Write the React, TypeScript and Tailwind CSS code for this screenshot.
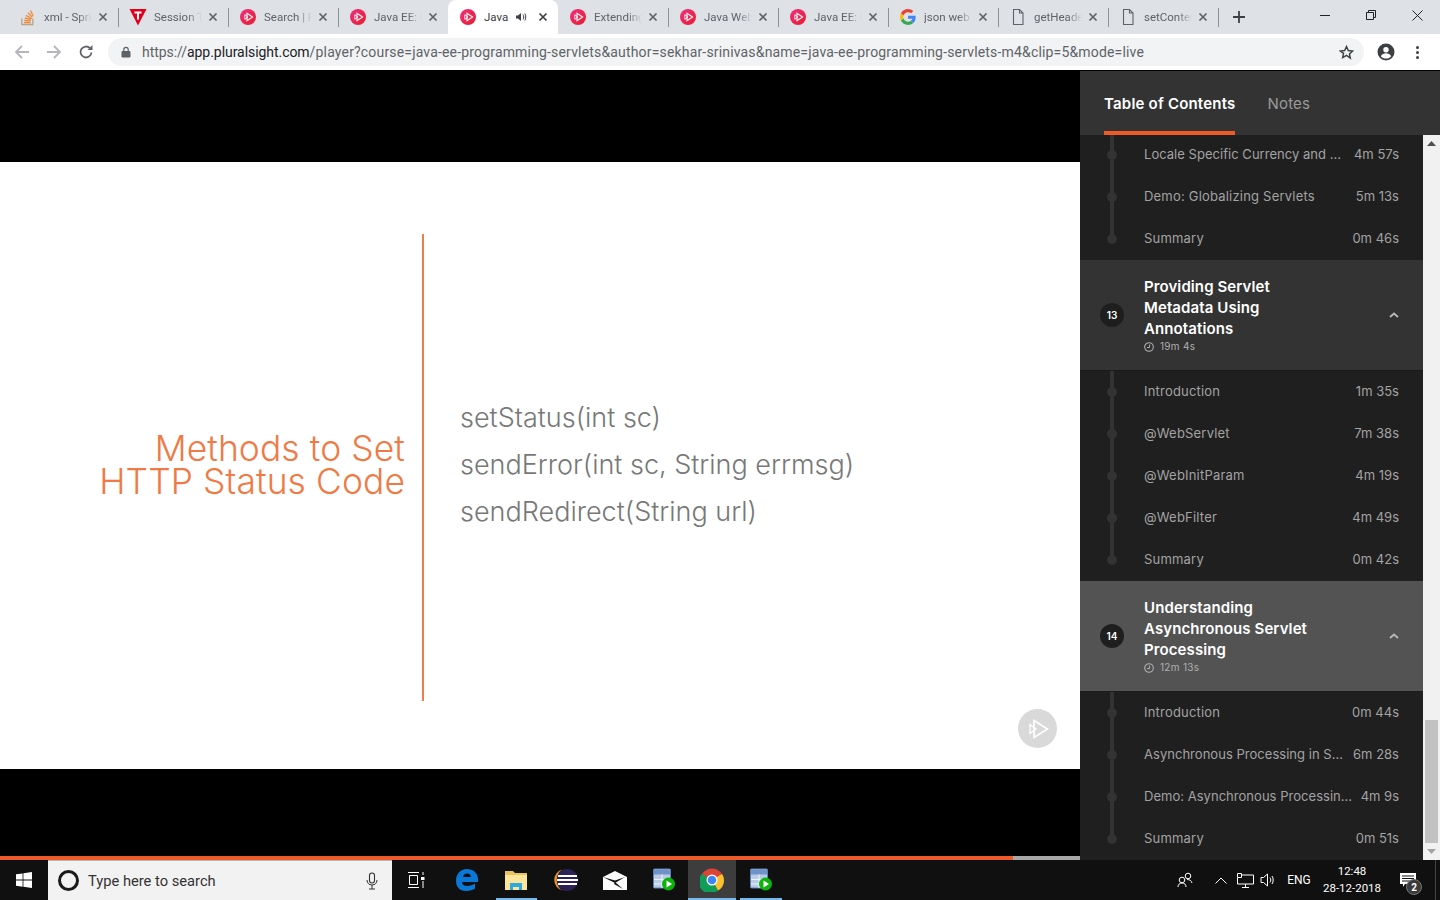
import React from "react";

const PS = () => (
  <svg width="16" height="16" viewBox="0 0 16 16" className="shrink-0">
    <defs>
      <linearGradient id="psg" x1="0" y1="0" x2="1" y2="1">
        <stop offset="0" stopColor="#f0307f" />
        <stop offset="1" stopColor="#e81c2c" />
      </linearGradient>
    </defs>
    <circle cx="8" cy="8" r="8" fill="url(#psg)" />
    <path d="M7 4.200v7.600L12.600 8z" fill="none" stroke="#fff" strokeWidth="1.100" />
    <path d="M4.800 5.700v4.600L8 8z" fill="none" stroke="#fff" strokeWidth=".9" />
  </svg>
);
const SO = () => (
  <svg width="16" height="18" viewBox="0 0 16 18" className="shrink-0">
    <path d="M1.800 10.500v6h11v-6" fill="none" stroke="#b9a38c" strokeWidth="1.300" />
    <path d="M4 14.500h6.500M4.200 12.300l6.400.6M4.800 10l6.200 1.600M6 7.400l5.600 3.200M8 4.800l4.400 4.500M10.500 2.500l2.700 5.500" fill="none" stroke="#f08a38" strokeWidth="1.300" />
  </svg>
);
const VI = () => (
  <svg width="18" height="18" viewBox="0 0 18 18" className="shrink-0">
    <path d="M.5 1h17L9 17.500z" fill="#e3001b" />
    <path d="M5.500 3.500h7v2h-2.500v6H8v-6H5.500z" fill="#fff" />
  </svg>
);
const G = () => (
  <svg width="16" height="16" viewBox="0 0 48 48" className="shrink-0">
    <path fill="#EA4335" d="M24 9.500c3.500 0 6.700 1.300 9.100 3.500l6.800-6.800C35.800 2.400 30.300 0 24 0 14.600 0 6.500 5.400 2.600 13.200l7.900 6.200C12.400 13.700 17.700 9.500 24 9.500z" />
    <path fill="#4285F4" d="M46.900 24.500c0-1.600-.1-3.100-.4-4.500H24v9h12.900c-.6 3-2.200 5.500-4.700 7.200l7.700 6c4.500-4.200 7-10.300 7-17.700z" />
    <path fill="#FBBC05" d="M10.500 28.600c-.5-1.400-.8-3-.8-4.600s.3-3.200.8-4.600l-7.900-6.200C.9 16.500 0 20.100 0 24s.9 7.500 2.600 10.800z" />
    <path fill="#34A853" d="M24 48c6.500 0 11.900-2.100 15.900-5.800l-7.700-6c-2.100 1.400-4.900 2.300-8.200 2.300-6.300 0-11.600-4.200-13.500-9.900l-7.900 6.200C6.500 42.600 14.600 48 24 48z" />
  </svg>
);
const Doc = () => (
  <svg width="16" height="18" viewBox="0 0 16 18" className="shrink-0">
    <path d="M3.500 1.500h6l3.500 3.500v11.500h-9.500zM9.500 1.500V5H13" fill="none" stroke="#5f6368" strokeWidth="1.100" />
  </svg>
);
const X = ({ c = "#5f6368" }: { c?: string }) => (
  <svg width="10" height="10" viewBox="0 0 10 10" className="shrink-0">
    <path d="M1.500 1.500l7 7M8.500 1.500l-7 7" stroke={c} strokeWidth="1.700" />
  </svg>
);
const Speaker = () => (
  <svg width="12" height="12" viewBox="0 0 12 12" className="shrink-0">
    <path d="M1 4.500h2L6 2v8L3 7.500H1z" fill="#3c4043" />
    <path d="M8 3.500c1 1.500 1 3.500 0 5M9.800 2.500c1.300 2 1.300 5 0 7" fill="none" stroke="#3c4043" strokeWidth="1" />
  </svg>
);

type Tab = { icon: React.ReactNode; title: string };
const tabs: Tab[] = [
  { icon: <SO />, title: "xml - Spring" },
  { icon: <VI />, title: "Session Tracking" },
  { icon: <PS />, title: "Search | Pluralsight" },
  { icon: <PS />, title: "Java EE: Programming" },
  { icon: <PS />, title: "Java" },
  { icon: <PS />, title: "Extending Servlets" },
  { icon: <PS />, title: "Java Web Services" },
  { icon: <PS />, title: "Java EE: Programming" },
  { icon: <G />, title: "json web token" },
  { icon: <Doc />, title: "getHeaders" },
  { icon: <Doc />, title: "setContentType" },
];

function TabStrip() {
  return (
    <div className="flex h-[34px] shrink-0 bg-[#dee1e6] pl-2">
      {tabs.map((t, i) => {
        const active = i === 4;
        return (
          <div
            key={i}
            className={
              active
                ? "relative flex h-[34px] w-[110px] shrink-0 items-center rounded-t-[8px] bg-white"
                : "relative flex h-[34px] w-[110px] shrink-0 items-center"
            }
          >
            <div className="flex w-9 shrink-0 justify-center pl-[4px]">{t.icon}</div>
            <div
              className={
                active
                  ? "w-[28px] overflow-hidden whitespace-nowrap pt-px text-[11.500px] text-[#3c4043]"
                  : "w-[48px] overflow-hidden whitespace-nowrap pt-px text-[11.500px] text-[#5f6368] [mask-image:linear-gradient(to_right,black_70%,transparent)]"
              }
            >
              {t.title}
            </div>
            {active && (
              <div className="ml-[3px] flex w-3 justify-center">
                <Speaker />
              </div>
            )}
            <div className={active ? "ml-[11px]" : "ml-[6px]"}>
              <X c={active ? "#3c4043" : "#5f6368"} />
            </div>
            {i !== 3 && i !== 4 && <div className="absolute top-[8px] -right-px h-[19px] w-px bg-[#8e9196]" />}
          </div>
        );
      })}
      <div className="ml-[9px] flex h-[34px] w-[24px] items-center justify-center">
        <svg width="14" height="14" viewBox="0 0 14 14">
          <path d="M7 1v12M1 7h12" stroke="#3c4043" strokeWidth="1.800" />
        </svg>
      </div>
      <div className="ml-auto flex h-[30px] items-center">
        <div className="flex w-[46px] justify-center">
          <svg width="10" height="10" viewBox="0 0 10 10"><path d="M0 5.500h10" stroke="#222" strokeWidth="1" /></svg>
        </div>
        <div className="flex w-[46px] justify-center">
          <svg width="10" height="10" viewBox="0 0 10 10"><path d="M.5 2.500h7v7h-7zM2.500 2.500v-2h7v7h-2" fill="none" stroke="#222" strokeWidth="1" /></svg>
        </div>
        <div className="flex w-[46px] justify-center">
          <svg width="11" height="11" viewBox="0 0 11 11"><path d="M.5.500l10 10M10.500.500l-10 10" stroke="#222" strokeWidth="1" /></svg>
        </div>
      </div>
    </div>
  );
}

function Toolbar() {
  return (
    <div className="flex h-[37px] shrink-0 items-center border-b border-black bg-white">
      <div className="flex w-[32px] justify-center pl-[12px]">
        <svg width="16" height="16" viewBox="0 0 16 16"><path d="M15 8H2M8 2L2 8l6 6" fill="none" stroke="#b4b6b9" strokeWidth="1.800" /></svg>
      </div>
      <div className="flex w-[32px] justify-center pl-[12px]">
        <svg width="16" height="16" viewBox="0 0 16 16"><path d="M1 8h13M8 2l6 6-6 6" fill="none" stroke="#b4b6b9" strokeWidth="1.800" /></svg>
      </div>
      <div className="flex w-[32px] justify-center pl-[12px]">
        <svg width="16" height="16" viewBox="0 0 16 16"><path d="M13.500 8.500A5.500 5.500 0 1 1 12 4.200" fill="none" stroke="#5f6368" strokeWidth="1.800" /><path d="M14.500 1v5h-5z" fill="#5f6368" /></svg>
      </div>
      <div className="ml-[12px] flex h-[28px] w-[1256px] items-center rounded-full bg-[#f1f3f4] pl-[13px]">
        <svg width="10" height="12" viewBox="0 0 10 12" className="shrink-0">
          <path d="M1 5.500h8V11H1z" fill="#5f6368" stroke="#5f6368" />
          <path d="M2.800 5.500V3.500a2.200 2.200 0 0 1 4.400 0v2" fill="none" stroke="#5f6368" strokeWidth="1.200" />
        </svg>
        <div className="ml-[11px] whitespace-nowrap text-[14px] tracking-[-0.05px] text-[#5f6368]">
          <span>https://</span>
          <span className="text-[#202124]">app.pluralsight.com</span>
          <span className="tracking-[0.17px]">/player?course=java-ee-programming-servlets&amp;author=sekhar-srinivas&amp;name=java-ee-programming-servlets-m4&amp;clip=5&amp;mode=live</span>
        </div>
        <div className="ml-auto pr-[10px]">
          <svg width="15" height="15" viewBox="0 0 24 24"><path d="M12 2.500l2.900 6.300 6.900.8-5.100 4.700 1.400 6.800L12 16.700 5.900 20.100l1.400-6.800L2.200 9.600l6.900-.8z" fill="none" stroke="#3c4043" strokeWidth="2.300" /></svg>
        </div>
      </div>
      <div className="ml-[13px] flex w-[18px] justify-center">
        <svg width="18" height="18" viewBox="0 0 18 18">
          <circle cx="9" cy="9" r="8.500" fill="#3c4043" />
          <circle cx="9" cy="6.800" r="2.700" fill="#fff" />
          <path d="M3.800 13.200c1.300-2.300 3.300-3 5.200-3s3.900.7 5.200 3c-1.300 1.500-3.100 2.300-5.200 2.300s-3.900-.8-5.200-2.300z" fill="#fff" />
        </svg>
      </div>
      <div className="ml-[21px] flex w-[4px] flex-col gap-[2px]">
        <div className="h-[3px] w-[3px] rounded-full bg-[#3c4043]" />
        <div className="h-[3px] w-[3px] rounded-full bg-[#3c4043]" />
        <div className="h-[3px] w-[3px] rounded-full bg-[#3c4043]" />
      </div>
    </div>
  );
}

function Slide() {
  return (
    <div className="relative flex h-[607px] shrink-0 items-center bg-white font-['Inter',sans-serif] font-light">
      <div className="w-[405px] shrink-0 pb-[2px] text-right text-[35.400px] leading-[33px] tracking-[0.1px] text-[#ef7a45]">
        <div>Methods to Set</div>
        <div>HTTP Status Code</div>
      </div>
      <div className="ml-[17px] mt-[3px] h-[467px] w-[2px] shrink-0 bg-[#ee7d4a]" />
      <div className="ml-[36px] pb-[2px] text-[27px] leading-[47px] text-[#787878]">
        <div>setStatus(int sc)</div>
        <div>sendError(int sc, String errmsg)</div>
        <div>sendRedirect(String url)</div>
      </div>
      <div className="absolute top-[547px] left-[1018px] flex h-[39px] w-[39px] items-center justify-center rounded-full bg-[#d9d9d9]">
        <svg width="22" height="22" viewBox="0 0 22 22">
          <path d="M7 2.500v17L20.500 11z" fill="none" stroke="#fff" strokeWidth="1.600" />
          <path d="M3 6.500v9L9 11z" fill="none" stroke="#fff" strokeWidth="1.300" />
        </svg>
      </div>
    </div>
  );
}

function Rows({ rows }: { rows: [string, string][] }) {
  return (
    <div>
      {rows.map(([t, d], i) => (
        <div key={i} className="flex h-[42px] items-center text-[13px] text-[#a3a3a3]">
          <div className="relative flex h-full w-[64px] shrink-0 justify-center">
            <div className={i === rows.length - 1 ? "h-1/2 w-[4px] bg-[#333333]" : "h-full w-[4px] bg-[#333333]"} />
            <div className="absolute top-[16px] left-[27px] h-[10px] w-[10px] rounded-full bg-[#333333]" />
          </div>
          <div className={t.endsWith("...") ? "min-w-0 flex-1 whitespace-nowrap tracking-[0.03px]" : "min-w-0 flex-1 whitespace-nowrap tracking-[0.2px]"}>{t}</div>
          <div className="shrink-0 whitespace-nowrap pr-[24px]">{d}</div>
        </div>
      ))}
    </div>
  );
}

function Section({ n, lines, time, bg }: { n: number; lines: string[]; time: string; bg: string }) {
  return (
    <div className={`flex h-[111px] items-center border-b border-[#1a1a1a] ${bg}`}>
      <div className="flex w-[64px] shrink-0 justify-center">
        <div className="flex h-[24px] w-[24px] items-center justify-center rounded-full bg-[#1e1e1e] text-[10px] font-semibold text-white">{n}</div>
      </div>
      <div className="flex-1">
        {lines.map((l) => (
          <div key={l} className="text-[15px] font-semibold leading-[21px] tracking-[0.1px] text-white">{l}</div>
        ))}
        <div className="flex h-[15px] items-center text-[10px] tracking-[0.3px] text-[#b0b0b0]">
          <svg width="10" height="10" viewBox="0 0 10 10" className="shrink-0">
            <circle cx="5" cy="5" r="4.300" fill="none" stroke="#b0b0b0" strokeWidth="1.100" />
            <path d="M5.500 2.500V5.500H3" fill="none" stroke="#b0b0b0" strokeWidth="1" />
          </svg>
          <span className="ml-[6px]">{time}</span>
        </div>
      </div>
      <div className="w-[34px] shrink-0">
        <svg width="10" height="6" viewBox="0 0 10 6"><path d="M1 5l4-3.500L9 5" fill="none" stroke="#b5b5b5" strokeWidth="2" /></svg>
      </div>
    </div>
  );
}

function Sidebar() {
  return (
    <div className="flex w-[360px] shrink-0 flex-col overflow-hidden bg-[#1f1f1f] font-['Inter',sans-serif]">
      <div className="flex h-[64px] shrink-0 gap-8 bg-[#333333] pl-6">
        <div className="flex h-[64px] items-center border-b-4 border-[#f05a28] pt-[6px] text-[15px] font-semibold tracking-[0.2px] text-white">Table of Contents</div>
        <div className="flex h-[64px] items-center pt-[2px] text-[15px] tracking-[0.2px] text-[#9a9a9a]">Notes</div>
      </div>
      <div className="flex min-h-0 flex-1">
        <div className="min-w-0 flex-1 overflow-hidden">
          <div className="-mt-px">
            <Rows rows={[["Locale Specific Currency and ...", "4m 57s"], ["Demo: Globalizing Servlets", "5m 13s"], ["Summary", "0m 46s"]]} />
            <Section n={13} lines={["Providing Servlet", "Metadata Using", "Annotations"]} time="19m 4s" bg="bg-[#333333]" />
            <Rows rows={[["Introduction", "1m 35s"], ["@WebServlet", "7m 38s"], ["@WebInitParam", "4m 19s"], ["@WebFilter", "4m 49s"], ["Summary", "0m 42s"]]} />
            <Section n={14} lines={["Understanding", "Asynchronous Servlet", "Processing"]} time="12m 13s" bg="bg-[#535353]" />
            <Rows rows={[["Introduction", "0m 44s"], ["Asynchronous Processing in S...", "6m 28s"], ["Demo: Asynchronous Processin...", "4m 9s"], ["Summary", "0m 51s"]]} />
          </div>
        </div>
        <div className="flex w-[17px] shrink-0 flex-col items-center bg-[#f1f1f1]">
          <svg width="9" height="5" viewBox="0 0 9 5" className="mt-[6px]"><path d="M4.500 0L9 5H0z" fill="#505050" /></svg>
          <div className="mt-[574px] h-[123px] w-[13px] bg-[#c1c1c1]" />
          <svg width="9" height="5" viewBox="0 0 9 5" className="mt-[6px]"><path d="M4.500 5L0 0h9z" fill="#a3a3a3" /></svg>
        </div>
      </div>
    </div>
  );
}

const Slot = ({ children, w = 49, cls = "" }: { children?: React.ReactNode; w?: number; cls?: string }) => (
  <div style={{ width: w }} className={`relative flex h-[40px] shrink-0 items-center justify-center ${cls}`}>
    {children}
  </div>
);
const Under = ({ full }: { full?: boolean }) => (
  <div className={full ? "absolute right-0 bottom-0 left-0 h-[2px] bg-[#76b9ed]" : "absolute right-[4px] bottom-0 left-[4px] h-[2px] bg-[#76b9ed]"} />
);

const RunApp = () => (
  <svg width="22" height="24" viewBox="0 0 22 24">
    <rect x=".5" y="1" width="17" height="19" rx="1" fill="#b9cbe6" stroke="#5a7fb8" />
    <path d="M1 1.500h16v5H1z" fill="#6f93c9" />
    <path d="M1 11.500h16M1 16h16M9 6.500V20" stroke="#eef3fa" strokeWidth="1" />
    <circle cx="15.500" cy="16" r="6.500" fill="#0db30d" />
    <path d="M13.500 12.500v7l5.500-3.500z" fill="#fff" />
  </svg>
);

function Taskbar() {
  return (
    <div className="flex h-[40px] shrink-0 items-center bg-[#101010] font-['Roboto',sans-serif] text-white">
      <Slot w={48}>
        <svg width="16" height="16" viewBox="0 0 16 16" fill="#fff">
          <path d="M0 2.300l6.600-.9v6.200H0zM7.400 1.300L16 0v7.600H7.400zM0 8.400h6.600v6.300L0 13.800zM7.400 8.400H16V16l-8.600-1.200z" />
        </svg>
      </Slot>
      <div className="flex h-[40px] w-[344px] shrink-0 items-center border-t border-[#b5b5b5] bg-[#f2f2f2] pl-[10px]">
        <div className="h-[21px] w-[21px] shrink-0 rounded-full border-[3px] border-[#1a1a1a]" />
        <div className="ml-[9px] pt-[2px] text-[14.700px] text-[#333333]">Type here to search</div>
        <div className="ml-auto pr-[14px]">
          <svg width="12" height="18" viewBox="0 0 12 18">
            <rect x="3.500" y="1" width="5" height="10" rx="2.500" fill="none" stroke="#333" strokeWidth="1.100" />
            <path d="M1 8c0 3 2 5 5 5s5-2 5-5M6 13v4M3 17h6" fill="none" stroke="#333" strokeWidth="1" />
          </svg>
        </div>
      </div>
      <Slot w={49}>
        <svg width="17" height="16" viewBox="0 0 17 16" fill="none" stroke="#fff" strokeWidth="1">
          <path d="M0 .5h11M0 15.500h11M1.500 3.500h8v9h-8zM15 0v3M15 9v7" />
          <path d="M13 5h3.500v3H13z" fill="#fff" stroke="none" />
        </svg>
      </Slot>
      <Slot w={51}>
        <svg width="22" height="24" viewBox="0 0 22 24">
          <path d="M11 1C4 1 0 6 0 13c0 7 5 10 10 10 4 0 7-1 9-2.500v-5c-2 1.500-5 2.500-8 2.500-3 0-5-1.500-5-4h16v-3C22 5 17 1 11 1zM7 9c.3-2 2-3.500 4-3.500s4 1.500 4 3.500z" fill="#0a78d7" />
        </svg>
      </Slot>
      <Slot w={49} cls="pr-[1px]">
        <svg width="22" height="20" viewBox="0 0 22 20">
          <path d="M0 1h8l2 2h12v17H0z" fill="#e9c45e" />
          <path d="M0 5h22v15H0z" fill="#fbe59a" />
          <path d="M5 20v-7h12v7h-3v-3H8v3z" fill="#2fa8e0" />
        </svg>
        <Under />
      </Slot>
      <Slot w={49}>
        <svg width="24" height="24" viewBox="0 0 24 24">
          <circle cx="13" cy="12" r="11" fill="#2c2255" />
          <path d="M8 1.500A11 11 0 0 0 8 22.500 13 13 0 0 1 8 1.500z" fill="#f7941e" />
          <path d="M4 8h19M3 12h21M4 16h19" stroke="#fff" strokeWidth="1.800" />
        </svg>
      </Slot>
      <Slot w={49}>
        <svg width="24" height="19" viewBox="0 0 24 19">
          <path d="M0 6L12 0l12 6v13H0z" fill="#fff" />
          <path d="M0 6l12 6 10-6-10 3.500z" fill="#101010" />
          <path d="M12 11l8 7-9-5z" fill="#101010" />
        </svg>
      </Slot>
      <Slot w={49}><RunApp /></Slot>
      <Slot w={48} cls="bg-[#3d3d3d]">
        <svg width="24" height="24" viewBox="0 0 24 24">
          <circle cx="12" cy="12" r="11.500" fill="#db4437" />
          <path d="M12 12L22 6a11.500 11.500 0 0 1-4 16.500z" fill="#fbc02d" />
          <path d="M12 12l6 10.500A11.500 11.500 0 0 1 2 6z" fill="#0f9d58" />
          <circle cx="12" cy="12" r="5.500" fill="#fff" />
          <circle cx="12" cy="12" r="4.300" fill="#4285f4" />
        </svg>
        <Under full />
      </Slot>
      <Slot w={50}>
        <RunApp />
        <Under />
      </Slot>
      <div className="ml-auto flex h-[40px] items-center">
        <Slot w={24}>
          <svg width="16" height="16" viewBox="0 0 16 16" fill="none" stroke="#fff" strokeWidth="1">
            <circle cx="11" cy="4" r="2.800" /><circle cx="5" cy="8" r="2.800" /><path d="M1 15c0-2.500 1.500-4 4-4s4 1.500 4 4M10 7.500c2.500 0 4.500 1 5 3.500" />
          </svg>
        </Slot>
        <Slot w={24} cls="ml-[12px]">
          <svg width="12" height="7" viewBox="0 0 12 7"><path d="M.5 6.500L6 1l5.500 5.500" fill="none" stroke="#fff" strokeWidth="1" /></svg>
        </Slot>
        <Slot w={24}>
          <svg width="17" height="15" viewBox="0 0 17 15" fill="none" stroke="#fff" strokeWidth="1">
            <path d="M4 2h12.500v9H.5V5M8.500 11v3M5 14.500h7" /><path d="M.5.500h4v4h-4z" />
          </svg>
        </Slot>
        <Slot w={22}>
          <svg width="16" height="14" viewBox="0 0 16 14" fill="none" stroke="#fff" strokeWidth="1">
            <path d="M1 4.500h2.500L7.500 1v12L3.500 9.500H1zM10 4.500c1 1.500 1 3.500 0 5M12 3c1.600 2.200 1.600 5.800 0 8" />
          </svg>
        </Slot>
        <Slot w={40} cls="text-[12px]">ENG</Slot>
        <div className="ml-[1px] flex w-[64px] flex-col items-center text-[11.500px] leading-[17px]">
          <div>12:48</div>
          <div className="whitespace-nowrap">28-12-2018</div>
        </div>
        <Slot w={32} cls="ml-[8px]">
          <svg width="17" height="16" viewBox="0 0 17 16"><path d="M0 1h16v11H5l-2 3v-3H0z" fill="#fff" /><path d="M2 4h12M2 6.500h12M2 9h8" stroke="#101010" strokeWidth="1" /></svg>
          <div className="absolute top-[19px] left-[14px] flex h-[16px] w-[16px] items-center justify-center rounded-full border border-[#777] bg-[#3a3a3a] text-[10px] font-bold">2</div>
        </Slot>
        <div className="ml-[11px] h-[40px] w-px bg-[#444444]" />
        <div className="w-[4px]" />
      </div>
    </div>
  );
}

export default function App() {
  return (
    <div className="flex h-[900px] w-[1440px] flex-col overflow-hidden bg-black font-['Roboto',sans-serif]">
      <TabStrip />
      <Toolbar />
      <div className="flex min-h-0 flex-1">
        <div className="flex w-[1080px] shrink-0 flex-col bg-black">
          <div className="h-[91px] shrink-0" />
          <Slide />
          <div className="flex-1" />
          <div className="flex h-[4px] shrink-0 bg-[#a8a8a8]">
            <div className="h-full w-[1013px] bg-[#f05a28]" />
          </div>
        </div>
        <Sidebar />
      </div>
      <Taskbar />
    </div>
  );
}
